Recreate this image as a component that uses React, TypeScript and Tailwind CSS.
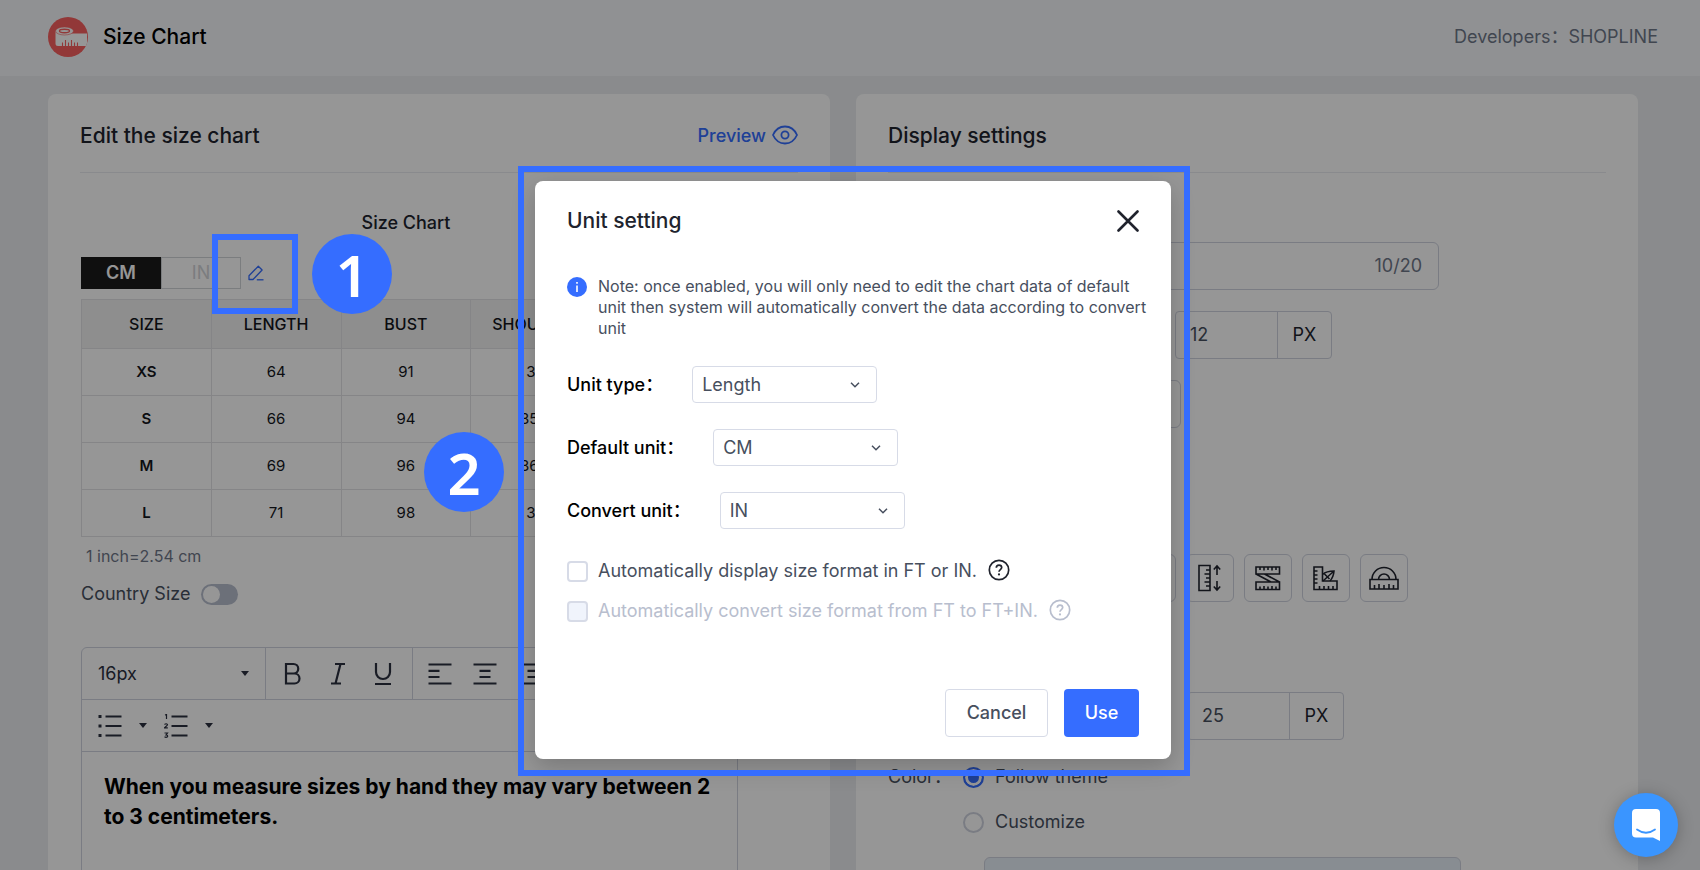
import { useState } from 'react';
import type { ReactNode } from 'react';

type Row = readonly [string, string, string, string];

const COLUMNS = ['SIZE', 'LENGTH', 'BUST', 'SHOULDER'];

const ROWS: readonly Row[] = [
  ['XS', '64', '91', '34'],
  ['S', '66', '94', '35.5'],
  ['M', '69', '96', '36.5'],
  ['L', '71', '98', '38'],
];

const fontStack = "font-['Inter','Noto_Sans_CJK_SC',sans-serif]";

/* ---------- icons ---------- */

function LogoIcon() {
  return (
    <svg viewBox="0 0 40 40" className="size-10" aria-hidden="true">
      <defs>
        <clipPath id="logo-clip">
          <circle cx="20" cy="20" r="20" />
        </clipPath>
      </defs>
      <circle cx="20" cy="20" r="20" fill="#f8605f" />
      <g clipPath="url(#logo-clip)">
        <path d="M7.500 14v12.500q0 2.500 2.500 2.500h29V16.500H24.500z" fill="#fff" />
        <ellipse cx="16.500" cy="14" rx="9" ry="4" fill="#fff" stroke="#f8605f" strokeWidth="0.600" />
        <ellipse cx="16.500" cy="14" rx="5" ry="1.700" fill="none" stroke="#f8605f" strokeWidth="1.400" />
        <path d="M14.500 29v-3.500M17.500 29v-6M20.500 29v-3.500M23.500 29v-6M26.500 29v-3.500M29.500 29v-3.500" stroke="#f8605f" strokeWidth="1.100" />
      </g>
    </svg>
  );
}

function EyeIcon() {
  return (
    <svg viewBox="0 0 26 20" className="mb-[2px] h-5 w-[26px]" fill="none" stroke="currentColor" strokeWidth="1.800" aria-hidden="true">
      <path d="M1 10C3.500 4.500 8 1.500 13 1.500S22.500 4.500 25 10c-2.500 5.500-7 8.500-12 8.500S3.500 15.500 1 10z" />
      <circle cx="13" cy="10" r="3.600" />
    </svg>
  );
}

function PencilIcon() {
  return (
    <svg viewBox="0 0 16 16" className="size-4" fill="none" stroke="currentColor" strokeWidth="1.300" strokeLinejoin="round" aria-hidden="true">
      <path d="M1 14.500v-3.800L10.300 1.200l3.800 3.800L5 14.500z" />
      <path d="M8.800 14.800H15.500" />
    </svg>
  );
}

function Caret() {
  return (
    <svg viewBox="0 0 8 5" className="h-[5px] w-2" fill="currentColor" aria-hidden="true">
      <path d="M0 0h8L4 5z" />
    </svg>
  );
}

function ToolIcon({ children }: { children: ReactNode }) {
  return (
    <svg viewBox="0 0 24 24" className="size-6" fill="none" stroke="currentColor" strokeWidth="2.200" aria-hidden="true">
      {children}
    </svg>
  );
}

function RulerIcon({ children }: { children: ReactNode }) {
  return (
    <svg viewBox="0 0 32 32" className="size-8" fill="none" stroke="currentColor" strokeWidth="1.600" aria-hidden="true">
      {children}
    </svg>
  );
}

function HelpIcon() {
  return (
    <svg viewBox="0 0 22 22" className="mb-[2px] size-[22px]" fill="none" stroke="currentColor" strokeWidth="1.700" aria-hidden="true">
      <circle cx="11" cy="11" r="9.700" />
      <path d="M8.300 8.800c0-1.600 1.200-2.700 2.700-2.700s2.700 1 2.700 2.500c0 1.900-2.700 2.100-2.700 4.200" />
      <circle cx="11" cy="15.400" r="1.100" fill="currentColor" stroke="none" />
    </svg>
  );
}

/* ---------- page ---------- */

function CardHeader({ title, children }: { title: string; children?: ReactNode }) {
  return (
    <div className="flex items-center justify-between border-b border-[#e9ebf0] pt-6 pb-[18px]">
      <h2 className="text-[21px]/9 font-medium text-[#20232d]">{title}</h2>
      {children}
    </div>
  );
}

function SizeTable() {
  return (
    <table className="mt-[10px] w-[520px] table-fixed border-collapse text-center text-[15px] text-[#14161c]">
      <thead>
        <tr className="h-[49px] bg-[#f2f2f2] text-base">
          {COLUMNS.map((c) => (
            <th key={c} className="border border-[#e2e3e6] p-0 font-medium">
              {c}
            </th>
          ))}
        </tr>
      </thead>
      <tbody>
        {ROWS.map(([size, ...cells]) => (
          <tr key={size} className="h-[47px]">
            <th className="border border-[#e2e3e6] p-0 font-semibold">{size}</th>
            {cells.map((v, i) => (
              <td key={i} className="border border-[#e2e3e6] p-0">
                {v}
              </td>
            ))}
          </tr>
        ))}
      </tbody>
    </table>
  );
}

function Editor() {
  const toolCls = 'flex w-[45px] items-center justify-center';
  return (
    <div className="mt-[39px] flex h-[400px] w-[657px] flex-col rounded-t-md border border-[#cfd3df] text-[#2c3040]">
      <div className="flex h-[52px] border-b border-[#cfd3df]">
        <button type="button" className="flex w-[184px] items-center justify-between border-r border-[#cfd3df] px-4 text-lg">
          16px <Caret />
        </button>
        <div className="flex w-[147px] items-stretch border-r border-[#cfd3df] pl-1">
          <button type="button" aria-label="Bold" className={toolCls}>
            <ToolIcon>
              <path d="M5 2h7.500a4.500 4.500 0 0 1 0 9.500H5zM5 11.500h8.500a5 5 0 0 1 0 10H5z" />
            </ToolIcon>
          </button>
          <button type="button" aria-label="Italic" className={toolCls}>
            <ToolIcon>
              <path d="M9 2h10M5 21.500h10M14.500 2l-5 19.500" />
            </ToolIcon>
          </button>
          <button type="button" aria-label="Underline" className={toolCls}>
            <ToolIcon>
              <path d="M5 1v9a7 7 0 0 0 14 0V1M4 22h16" />
            </ToolIcon>
          </button>
        </div>
        <div className="flex items-stretch pl-1">
          <button type="button" aria-label="Align left" className={toolCls}>
            <ToolIcon>
              <path d="M.5 2.500h23M.5 8.800h11M.5 15h11M.5 21.500h23" />
            </ToolIcon>
          </button>
          <button type="button" aria-label="Align center" className={toolCls}>
            <ToolIcon>
              <path d="M.5 2.500h23M6.500 8.800h11M6.500 15h11M.5 21.500h23" />
            </ToolIcon>
          </button>
          <button type="button" aria-label="Align right" className={toolCls}>
            <ToolIcon>
              <path d="M.5 2.500h23M9.500 8.800h14M9.500 15h14M.5 21.500h23" />
            </ToolIcon>
          </button>
        </div>
      </div>
      <div className="flex h-[52px] items-center border-b border-[#cfd3df] pl-4">
        <button type="button" aria-label="Bulleted list" className="flex items-center gap-[17px]">
          <ToolIcon>
            <path d="M7.500 2.500h16M7.500 12h16M7.500 21.500h16" />
            <path d="M.5 2.500h3M.5 12h3M.5 21.500h3" strokeWidth="3" />
          </ToolIcon>
          <Caret />
        </button>
        <button type="button" aria-label="Numbered list" className="ml-[17px] flex items-center gap-[17px]">
          <ToolIcon>
            <path d="M7.500 2.500h16M7.500 12h16M7.500 21.500h16" />
            <path d="M1 1l1.500-.5V5M.5 10.500q1.800-1.500 3 0 0 1-3 3.300h3.300M.5 19h3l-1.500 2q2 0 1.500 1.800-1.500 1-3 0" strokeWidth="1.200" />
          </ToolIcon>
          <Caret />
        </button>
      </div>
      <p className="px-[22px] pt-5 text-[21px]/[30px] font-bold text-black">
        When you measure sizes by hand they may vary between 2 to 3 centimeters.
      </p>
    </div>
  );
}

function PixelInput({ label, value, className }: { label: string; value: string; className: string }) {
  return (
    <div className={`flex h-12 w-[157px] rounded border border-[#cfd3df] text-lg ${className}`}>
      <input aria-label={label} defaultValue={value} className="w-[102px] border-r border-[#cfd3df] pl-[14px] text-[#474f5e] outline-none" />
      <span className="flex flex-1 items-center justify-center text-[#20232d]">PX</span>
    </div>
  );
}

function DisplaySettings() {
  const [color, setColor] = useState('theme');
  const iconCls = 'flex size-12 items-center justify-center rounded-md border border-[#cfd3df] text-[#20232d]';
  const radioCls =
    'size-[21px] appearance-none rounded-full border-2 border-[#cfd3df] checked:border-[#356dff] checked:bg-[#356dff] checked:shadow-[inset_0_0_0_3px_white]';

  return (
    <section className="rounded-lg bg-white px-8">
      <CardHeader title="Display settings" />
      <div className="mt-[69px] ml-[100px] flex h-12 w-[451px] items-center rounded-md border border-[#cfd3df] pr-4 text-lg text-[#6f7789]">
        <input aria-label="Title" className="min-w-0 flex-1 outline-none" />
        10/20
      </div>
      <PixelInput label="Font size" value="12" className="mt-[21px] ml-[287px]" />
      <select aria-label="Font weight" className="mt-[21px] ml-[100px] block h-12 w-[193px] appearance-none rounded-md border border-[#cfd3df]" />
      <div className="mt-[126px] ml-[240px] flex gap-[10px]">
        <button type="button" aria-label="Tape icon" className={iconCls} />
        <button type="button" aria-label="Vertical ruler icon" className={iconCls}>
          <RulerIcon>
            <path d="M5 3.500h11v25H5zM16 8h-4M16 12h-5.500M16 16h-4M16 20h-5.500M16 24h-4" />
            <path d="M23 4v9M19.800 7.500L23 4l3.200 3.500M23 19v9M19.800 24.500L23 28l3.200-3.500" />
          </RulerIcon>
        </button>
        <button type="button" aria-label="Folding ruler icon" className={iconCls}>
          <RulerIcon>
            <path d="M4 5h23.500v7H4zM4 20h23.500v7.500H4zM4 12l15 8M12.500 12l15 8" />
            <path d="M8 5v3M12 5v3.500M16 5v3M20 5v3.500M24 5v3M8 27.500v-3M12 27.500v-3.500M16 27.500v-3M20 27.500v-3.500M24 27.500v-3" />
          </RulerIcon>
        </button>
        <button type="button" aria-label="Corner ruler icon" className={iconCls}>
          <RulerIcon>
            <path d="M4 5h8.500v14H27v8.500H4zM4 9h3.500M4 13h3.500M4 17h3.500M4 21h3.500M9.500 27.500V24M14 27.500V24M18.500 27.500V24M23 27.500V24" />
            <path d="M12.500 12.500q4-3.500 11.500-3.500-.5 6-4 10M13 19l11-10M14.500 12l5 5" />
          </RulerIcon>
        </button>
        <button type="button" aria-label="Protractor icon" className={iconCls}>
          <RulerIcon>
            <path d="M2 17.500h28V27H2zM4 17.500a12 12 0 0 1 24 0M10.500 17.500a5.500 5.500 0 0 1 11 0" />
            <path d="M6.500 27v-4M11 27v-5M16 27v-4M21 27v-5M25.500 27v-4" />
          </RulerIcon>
        </button>
      </div>
      <PixelInput label="Icon size" value="25" className="mt-[90px] ml-[299px]" />
      <fieldset className="mt-6 text-lg/[26px] text-[#474f5e]">
        <div className="flex items-center">
          <span className="w-[75px]">Color：</span>
          <input id="color-theme" type="radio" name="color" className={radioCls} checked={color === 'theme'} onChange={() => setColor('theme')} />
          <label htmlFor="color-theme" className="ml-[11px]">
            Follow theme
          </label>
        </div>
        <div className="mt-[19px] flex items-center pl-[75px]">
          <input id="color-custom" type="radio" name="color" className={radioCls} checked={color === 'custom'} onChange={() => setColor('custom')} />
          <label htmlFor="color-custom" className="ml-[11px]">
            Customize
          </label>
        </div>
      </fieldset>
      <input aria-label="Custom color" disabled className="mt-[22px] ml-24 block h-12 w-[477px] rounded-md border border-[#cfd3df] bg-[#e8f0f8]" />
    </section>
  );
}

/* ---------- dialog ---------- */

interface UnitSelectProps {
  readonly id: string;
  readonly label: string;
  readonly options: readonly string[];
}

function UnitSelect({ id, label, options }: UnitSelectProps) {
  return (
    <div className="flex items-center gap-[29px]">
      <label htmlFor={id} className="text-lg font-medium text-black">
        {label}：
      </label>
      <div className="relative">
        <select id={id} className="h-[37px] w-[185px] appearance-none rounded border border-[#d7dbe7] bg-white pl-[9px] text-lg/7 text-[#474f5e] outline-none">
          {options.map((o) => (
            <option key={o}>{o}</option>
          ))}
        </select>
        <svg viewBox="0 0 10 6" className="pointer-events-none absolute top-4 right-[17px] h-[6px] w-[10px]" fill="none" stroke="#474f5e" strokeWidth="1.500" aria-hidden="true">
          <path d="M1 .8l4 4 4-4" />
        </svg>
      </div>
    </div>
  );
}

function UnitDialog() {
  const boxCls = 'size-[21px] appearance-none rounded border-2 border-[#d7dbe7] checked:bg-[#356dff] disabled:bg-[#f0f4fc]';
  return (
    <div role="dialog" aria-labelledby="unit-title" className="relative w-[636px] rounded-lg bg-white px-8 py-[22px] shadow-[0_8px_24px_rgba(0,0,0,0.2)]">
      <div className="flex items-center justify-between">
        <h1 id="unit-title" className="text-[21px]/9 font-medium text-[#20232d]">
          Unit setting
        </h1>
        <button type="button" aria-label="Close">
          <svg viewBox="0 0 22 22" className="size-[22px]" stroke="#20232d" strokeWidth="2.600" strokeLinecap="round" aria-hidden="true">
            <path d="M1.500 1.500l19 19M20.500 1.500l-19 19" />
          </svg>
        </button>
      </div>
      <div className="-mr-3 mt-[37px] flex gap-[11px]">
        <svg viewBox="0 0 20 20" className="mt-px size-5 shrink-0" aria-hidden="true">
          <circle cx="10" cy="10" r="10" fill="#356dff" />
          <path d="M10 8.500v6.500M10 5v1.800" stroke="#fff" strokeWidth="1.600" />
        </svg>
        <p className="text-base/[21px] text-[#474f5e]">
          Note: once enabled, you will only need to edit the chart data of default unit then system will automatically convert the data
          according to convert unit
        </p>
      </div>
      <div className="mt-[27px] flex flex-col gap-[26px]">
        <UnitSelect id="unit-type" label="Unit type" options={['Length', 'Weight']} />
        <UnitSelect id="default-unit" label="Default unit" options={['CM', 'IN']} />
        <UnitSelect id="convert-unit" label="Convert unit" options={['IN', 'CM']} />
      </div>
      <div className="mt-7 flex flex-col gap-3 text-lg/7">
        <div className="flex items-center text-[#474f5e]">
          <input id="auto-display" type="checkbox" className={boxCls} />
          <label htmlFor="auto-display" className="mr-[11px] ml-[10px]">
            Automatically display size format in FT or IN.
          </label>
          <span className="text-[#20232d]">
            <HelpIcon />
          </span>
        </div>
        <div className="flex items-center text-[#b8bece]">
          <input id="auto-convert" type="checkbox" disabled className={boxCls} />
          <label htmlFor="auto-convert" className="mr-[11px] ml-[10px]">
            Automatically convert size format from FT to FT+IN.
          </label>
          <HelpIcon />
        </div>
      </div>
      <div className="mt-16 flex justify-end gap-4 text-lg font-medium">
        <button type="button" className="h-12 w-[103px] rounded border border-[#d7dbe7] text-[#474f5e]">
          Cancel
        </button>
        <button type="button" className="h-12 w-[75px] rounded bg-[#356dff] text-white">
          Use
        </button>
      </div>
      {/* highlight around the dialog */}
      <div className="pointer-events-none absolute -top-[15px] -right-[19px] -bottom-[17px] -left-[17px] border-6 border-[#356dff]" />
    </div>
  );
}

function StepBadge({ step, className }: { step: number; className: string }) {
  return (
    <div
      className={`absolute flex size-20 items-center justify-center rounded-full bg-[#356dff] font-['Noto_Sans',sans-serif] text-[58px] font-semibold text-white ${className}`}
    >
      {step}
    </div>
  );
}

export default function App() {
  return (
    <div className={`relative h-screen overflow-hidden bg-[#ebedf0] ${fontStack}`}>
      <header className="flex h-[76px] items-center justify-between bg-[#f5f7fa] pr-[42px] pb-[3px] pl-12">
        <div className="flex items-center gap-[15px]">
          <LogoIcon />
          <span className="text-[21px] font-medium text-black">Size Chart</span>
        </div>
        <span className="text-lg text-[#6f7789]">Developers：SHOPLINE</span>
      </header>

      <main className="grid grid-cols-2 gap-[26px] pt-[18px] pr-[62px] pl-12">
        <section className="rounded-lg bg-white px-8">
          <CardHeader title="Edit the size chart">
            <a href="#preview" className="flex items-center gap-[6px] text-lg font-medium text-[#356dff]">
              Preview <EyeIcon />
            </a>
          </CardHeader>
          <div className="pl-px">
            <p className="w-[650px] pt-9 text-center text-lg/7 font-medium text-[#20232d]">Size Chart</p>
            <div className="mt-5 flex items-center">
              <button type="button" className="h-8 w-20 bg-[#1a1a1a] text-lg font-semibold text-white">
                CM
              </button>
              <button type="button" className="h-8 w-20 border border-[#d2d4d8] text-lg text-[#d2d4d8]">
                IN
              </button>
              <button type="button" aria-label="Edit unit" className="ml-[7px] text-[#356dff]">
                <PencilIcon />
              </button>
            </div>
            <SizeTable />
            <p className="mt-[9px] pl-[5px] text-base/5 text-[#6f7789]">1 inch=2.54 cm</p>
            <div className="mt-[14px] flex items-center gap-[11px]">
              <label htmlFor="country-size" className="text-lg/7 text-[#474f5e]">
                Country Size
              </label>
              <input
                id="country-size"
                type="checkbox"
                role="switch"
                className="flex h-[21px] w-[37px] appearance-none items-center rounded-full bg-[#b8bece] px-[2px] before:size-[17px] before:rounded-full before:bg-white"
              />
            </div>
            <Editor />
          </div>
        </section>
        <DisplaySettings />
      </main>

      <div className="absolute inset-0 flex items-start justify-center bg-black/41 pt-[181px] pl-[6px]">
        <UnitDialog />
      </div>

      {/* walkthrough marks */}
      <div className="pointer-events-none absolute top-[234px] left-[212px] h-20 w-[86px] border-6 border-[#356dff]" />
      <StepBadge step={1} className="top-[234px] left-[312px]" />
      <StepBadge step={2} className="top-[432px] left-[424px]" />

      <button type="button" aria-label="Open chat" className="absolute right-[22px] bottom-[13px] flex size-16 items-center justify-center rounded-full bg-[#3a95ff] shadow-[0_2px_16px_rgba(0,0,0,0.25)]">
        <svg viewBox="0 0 28 32" className="h-8 w-7" aria-hidden="true">
          <path d="M4 0h20q4 0 4 4v28l-7-3.500H4q-4 0-4-4V4q0-4 4-4z" fill="#fff" />
          <path d="M5 20.500q9 6.500 18 0" fill="none" stroke="#3a95ff" strokeWidth="1.800" strokeLinecap="round" />
        </svg>
      </button>
    </div>
  );
}
